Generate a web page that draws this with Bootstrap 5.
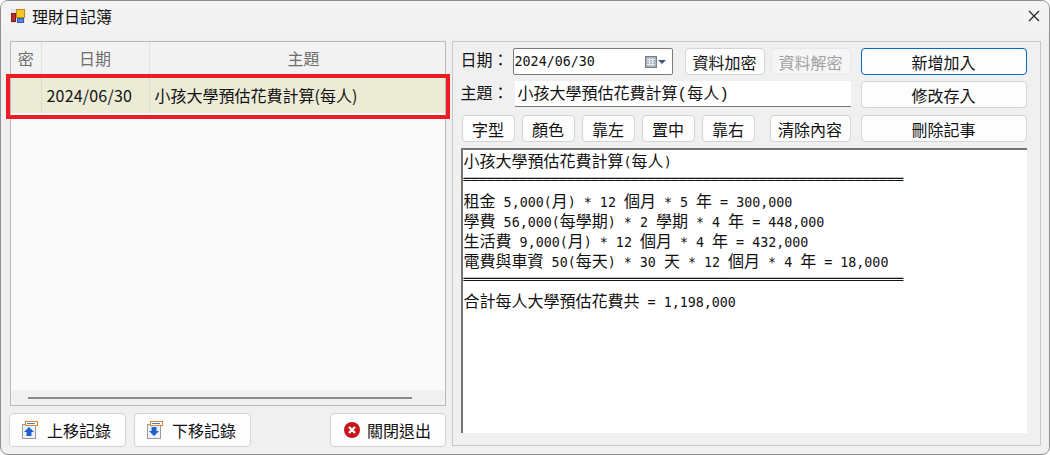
<!DOCTYPE html>
<html lang="zh-Hant">
<head>
    <meta charset="UTF-8">
    <title>理財日記簿</title>
    <link href="https://cdn.jsdelivr.net/npm/bootstrap@5.3.0/dist/css/bootstrap.min.css" rel="stylesheet">
    <style>
        html, body { margin: 0; width: 1050px; height: 455px; overflow: hidden; background: #fff; }
        body { font-family: "Noto Sans CJK TC", "Liberation Sans", sans-serif; font-size: 16px; color: #111; }
        .app-window { width: 1050px; height: 455px; background: #f0f0f0; border: 1px solid #8f8f8f; border-radius: 8px; overflow: hidden; }
        .title-bar { height: 30px; background: #f3f3f3; padding-left: 9px; gap: 6px; line-height: 30px; }
        .close-x { margin-left: auto; margin-right: 9px; }
        .main-area { padding: 10px 8px 0 9px; gap: 6px; }
        .left-col { width: 436px; }
        .grid-box { height: 365px; background: #f0f0f0; border: 1px solid #b9b9b9; }
        .grid-body { height: 348px; background: #fafafa; }
        .grid-table { width: 100%; table-layout: fixed; margin: 0; border-collapse: collapse; }
        .grid-table th { height: 33px; background: #f3f3f3; color: #6e6e6e; font-weight: 400; text-align: center; padding: 0; border-right: 1px solid #e2e2e2; border-bottom: 3px solid #f8f8f8; }
        .grid-table th:last-child { padding-left: 13px; }
        .grid-table td { height: 38px; background: #ecebd6; color: #111; padding: 0 0 0 5px; border-right: 1px solid #dcdbc8; white-space: nowrap; }
        .grid-table td.date-cell { letter-spacing: .2px; }
        .grid-table th:last-child, .grid-table td:last-child { border-right: 0; }
        .col-lock { width: 30px; }
        .col-date { width: 108px; }
        .red-frame { position: absolute; left: -5px; top: 32px; width: 444px; height: 45px; border: 4px solid #ed1c24; }
        .scroll-track { height: 16px; }
        .scroll-thumb { width: 384px; height: 2px; margin-left: 17px; background: #8a8a8a; }
        .win-btn { height: 27px; padding: 0; font-size: 16px; line-height: 1; color: #111; background: #fdfdfd; border: 1px solid #d3d3d3; border-radius: 4px; --bs-btn-hover-bg: #fdfdfd; }
        .win-btn.is-default { border-color: #0067c0; }
        .win-btn.is-off { color: #a2a2a2; background: #f5f5f5; border-color: #e6e6e6; opacity: 1; }
        .left-buttons { margin-top: 7px; margin-left: -1px; }
        .left-buttons .win-btn { width: 117px; height: 34px; gap: 9px; padding-right: 2px; }
        .left-buttons .exit-btn { margin-left: auto; width: 116px; gap: 7px; padding-right: 0; }
        .spacer-btn { margin-left: 8px; }
        .right-panel { width: 590px; height: 405px; border: 1px solid #c8c8c8; padding: 6px 13px 0 8px; }
        .form-line { gap: 6px; height: 27px; }
        .form-line + .form-line { margin-top: 6px; }
        .form-label-win { width: 46px; height: 27px; margin: 0; white-space: nowrap; color: #111; line-height: 22px; }
        .date-box { width: 160px; height: 27px; background: #fff; border: 1px solid #7a7a7a; border-radius: 2px; padding-right: 5px; margin-right: 6px; }
        .date-box input { width: 120px; border: 0; outline: 0; padding: 0 0 0 1px; background: transparent; font: 13.33px "DejaVu Sans Mono", monospace; color: #111; }
        .topic-input { width: 336px; height: 26px; margin-left: 2px; margin-bottom: 1px; border: 0; border-bottom: 1px solid #777; border-radius: 0; padding: 0 0 4px 3px; background: #fff; font: 16px "Liberation Mono", "Noto Sans CJK TC", monospace; color: #111; outline: 0; }
        .w-80 { width: 80px; }
        .w-52 { width: 53px; }
        .w-166 { width: 166px; margin-left: 4px; }
        .tool-line { gap: 6px; margin: 7px 0 6px 1px; }
        .tool-line .w-52 + .w-52 { margin-left: 1px; }
        .clear-btn { width: 81px; margin-left: 9px; }
        .note-box { width: 566px; height: 285px; background: #fff; border-style: solid; border-color: #747474 #f0f0f0 #f0f0f0 #747474; border-width: 2px 0 0 2px; padding: 0 0 0 1px; line-height: 20px; color: #111; }
        .note-box div { height: 20px; white-space: pre; }
        .lat { font-family: "DejaVu Sans Mono", monospace; font-size: 13.33px; }
        .double-rule { letter-spacing: -.03px; }
    </style>
</head>
<body>
    <div class="app-window d-flex flex-column">
        <!-- title bar -->
        <div class="title-bar d-flex align-items-center">
            <svg width="16" height="16" viewBox="0 0 16 16">
                <rect x="1" y="1" width="14" height="14" fill="#e4e4e4"/>
                <rect x="6.500" y="1.500" width="8" height="8" fill="#f5c32c" stroke="#b98a1a"/>
                <rect x="1.500" y="5.500" width="4" height="8" fill="#c42a2a" stroke="#7c1f1f"/>
                <rect x="7.500" y="10.500" width="6" height="4" fill="#4f86dc" stroke="#2f5ea8"/>
            </svg>
            <span>理財日記簿</span>
            <svg class="close-x" width="12" height="12" viewBox="0 0 12 12"><path d="M1 1l10 10M11 1L1 11" stroke="#222" stroke-width="1.2"/></svg>
        </div>

        <div class="main-area d-flex">
            <!-- record list -->
            <div class="left-col">
                <div class="grid-box position-relative">
                    <div class="grid-body">
                        <table class="grid-table">
                            <thead>
                                <tr><th class="col-lock">密</th><th class="col-date">日期</th><th>主題</th></tr>
                            </thead>
                            <tbody>
                                <tr><td></td><td class="date-cell">2024/06/30</td><td>小孩大學預估花費計算(每人)</td></tr>
                            </tbody>
                        </table>
                    </div>
                    <div class="scroll-track d-flex align-items-center"><div class="scroll-thumb"></div></div>
                    <div class="red-frame"></div>
                </div>
                <div class="left-buttons d-flex">
                    <button class="btn win-btn d-flex align-items-center justify-content-center">
                        <svg width="16" height="18" viewBox="0 0 16 18">
                            <rect x="0.5" y="3.5" width="13" height="14" fill="#eef2f8" stroke="#9a9a9a"/>
                            <rect x="3.5" y="0.5" width="12" height="4" fill="#fff" stroke="#e8822a"/>
                            <path d="M5 2.5h8" stroke="#3b83d8"/>
                            <path d="M7 6l5 5H9.5v4h-5v-4H2z" fill="#1b62d0"/>
                        </svg>
                        <span>上移記錄</span>
                    </button>
                    <button class="btn win-btn spacer-btn d-flex align-items-center justify-content-center">
                        <svg width="16" height="18" viewBox="0 0 16 18">
                            <rect x="0.5" y="3.5" width="13" height="14" fill="#eef2f8" stroke="#9a9a9a"/>
                            <rect x="3.5" y="0.5" width="12" height="4" fill="#fff" stroke="#e8822a"/>
                            <path d="M5 2.5h8" stroke="#3b83d8"/>
                            <path d="M4.500 6h5v4H12l-5 5-5-5h2.500z" fill="#1b62d0"/>
                        </svg>
                        <span>下移記錄</span>
                    </button>
                    <button class="btn win-btn exit-btn d-flex align-items-center justify-content-center">
                        <svg width="16" height="16" viewBox="0 0 16 16">
                            <circle cx="8" cy="8" r="8" fill="#c8161d"/>
                            <path d="M5 5l6 6M11 5l-6 6" stroke="#fff" stroke-width="2.400"/>
                        </svg>
                        <span>關閉退出</span>
                    </button>
                </div>
            </div>

            <!-- editor -->
            <div class="right-panel">
                <div class="form-line d-flex align-items-center">
                    <label class="form-label-win">日期：</label>
                    <div class="date-box d-flex align-items-center">
                        <input type="text" value="2024/06/30">
                        <svg class="ms-auto" width="22" height="14" viewBox="0 0 22 14">
                            <rect x="0.500" y="1.500" width="11" height="11" fill="#a9b2c2" stroke="#7d7d7d"/>
                            <path d="M2 4.500h8M2 7h8M2 9.500h8M4.500 3v8M7.500 3v8" stroke="#e8ebf0"/>
                            <path d="M13 5h8l-4 4z" fill="#3c5a86"/>
                        </svg>
                    </div>
                    <button class="btn win-btn w-80">資料加密</button>
                    <button class="btn win-btn is-off w-80" disabled>資料解密</button>
                    <button class="btn win-btn is-default w-166">新增加入</button>
                </div>
                <div class="form-line d-flex align-items-center">
                    <label class="form-label-win">主題：</label>
                    <input class="topic-input" type="text" value="小孩大學預估花費計算(每人)">
                    <button class="btn win-btn w-166">修改存入</button>
                </div>
                <div class="tool-line d-flex">
                    <button class="btn win-btn w-52">字型</button>
                    <button class="btn win-btn w-52">顏色</button>
                    <button class="btn win-btn w-52">靠左</button>
                    <button class="btn win-btn w-52">置中</button>
                    <button class="btn win-btn w-52">靠右</button>
                    <button class="btn win-btn clear-btn">清除內容</button>
                    <button class="btn win-btn w-166">刪除記事</button>
                </div>
                <div class="note-box">
                    <div>小孩大學預估花費計算<span class="lat">(</span>每人<span class="lat">)</span></div>
                    <div class="lat double-rule">═══════════════════════════════════════════════════════</div>
                    <div>租金<span class="lat"> 5,000(</span>月<span class="lat">) * 12 </span>個月<span class="lat"> * 5 </span>年<span class="lat"> = 300,000</span></div>
                    <div>學費<span class="lat"> 56,000(</span>每學期<span class="lat">) * 2 </span>學期<span class="lat"> * 4 </span>年<span class="lat"> = 448,000</span></div>
                    <div>生活費<span class="lat"> 9,000(</span>月<span class="lat">) * 12 </span>個月<span class="lat"> * 4 </span>年<span class="lat"> = 432,000</span></div>
                    <div>電費與車資<span class="lat"> 50(</span>每天<span class="lat">) * 30 </span>天<span class="lat"> * 12 </span>個月<span class="lat"> * 4 </span>年<span class="lat"> = 18,000</span></div>
                    <div class="lat double-rule">═══════════════════════════════════════════════════════</div>
                    <div>合計每人大學預估花費共<span class="lat"> = 1,198,000</span></div>
                </div>
            </div>
        </div>
    </div>
    <script src="https://cdn.jsdelivr.net/npm/bootstrap@5.3.0/dist/js/bootstrap.bundle.min.js"></script>
</body>
</html>
